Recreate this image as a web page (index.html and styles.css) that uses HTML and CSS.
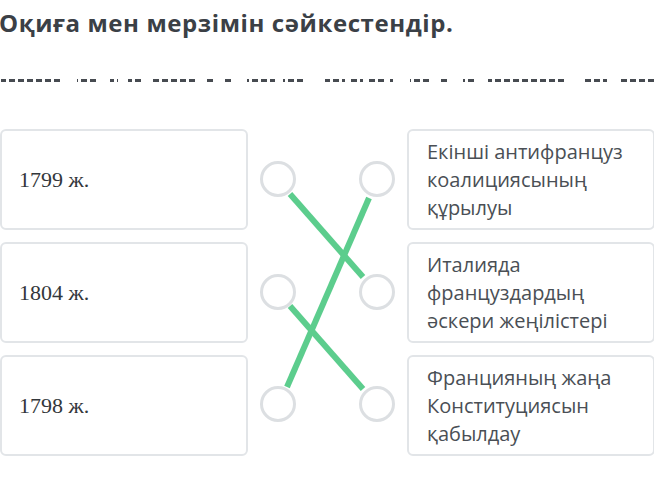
FILE: index.html
```html
<!DOCTYPE html>
<html>
<head>
    <title>Оқиға мен мерзімін сәйкестендір</title>
    <link rel="stylesheet" href="styles.css">
</head>
<body>

<div class="quiz">
    <h1 class="title">Оқиға мен мерзімін сәйкестендір.</h1>

    <!-- hidden hint line, only its bottom edge shows -->
    <svg class="scribble" width="654" height="3" viewBox="0 0 654 3">
        <defs>
            <pattern id="dash" width="9" height="3" patternUnits="userSpaceOnUse">
                <rect width="6" height="3" fill="#474b51"></rect>
            </pattern>
        </defs>
        <g fill="url(#dash)">
            <rect x="1" width="62" height="3"></rect>
            <rect x="77" width="20" height="3"></rect>
            <rect x="110" width="8" height="3"></rect>
            <rect x="128" width="14" height="3"></rect>
            <rect x="152" width="46" height="3"></rect>
            <rect x="205" width="10" height="3"></rect>
            <rect x="222" width="11" height="3"></rect>
            <rect x="247" width="28" height="3"></rect>
            <rect x="283" width="22" height="3"></rect>
            <rect x="325" width="20" height="3"></rect>
            <rect x="350" width="13" height="3"></rect>
            <rect x="368" width="17" height="3"></rect>
            <rect x="390" width="5" height="3"></rect>
            <rect x="410" width="20" height="3"></rect>
            <rect x="440" width="8" height="3"></rect>
            <rect x="463" width="14" height="3"></rect>
            <rect x="488" width="79" height="3"></rect>
            <rect x="583" width="24" height="3"></rect>
            <rect x="620" width="34" height="3"></rect>
        </g>
    </svg>

    <div class="match">
        <div class="column">
            <div class="card date">1799 ж.</div>
            <div class="card date">1804 ж.</div>
            <div class="card date">1798 ж.</div>
        </div>

        <svg class="links" width="159" height="327" viewBox="0 0 159 327">
            <g class="wire">
                <line x1="42" y1="65" x2="115" y2="148"></line>
                <line x1="121" y1="69" x2="39" y2="258"></line>
                <line x1="42" y1="177" x2="115" y2="260"></line>
            </g>
            <g class="pin">
                <circle cx="30" cy="50" r="16.5"></circle>
                <circle cx="129" cy="50" r="16.5"></circle>
                <circle cx="30" cy="163" r="16.5"></circle>
                <circle cx="129" cy="163" r="16.5"></circle>
                <circle cx="30" cy="275" r="16.5"></circle>
                <circle cx="129" cy="275" r="16.5"></circle>
            </g>
        </svg>

        <div class="column">
            <div class="card event">Екінші антифранцуз коалициясының құрылуы</div>
            <div class="card event">Италияда француздардың әскери жеңілістері</div>
            <div class="card event">Францияның жаңа Конституциясын қабылдау</div>
        </div>
    </div>
</div>

</body>
</html>
```

FILE: styles.css
```css
body {
    margin: 0;
    background: #fff;
    overflow: hidden;
}

.quiz {
    padding: 7px 0 0 0;
}

.title {
    margin: 0 0 0 -1px;
    font-family: "Open Sans", "Noto Sans", sans-serif;
    font-weight: 700;
    font-size: 24px;
    line-height: 32px;
    letter-spacing: 0.6px;
    color: #3b4046;
}

.scribble {
    display: block;
    margin: 40px 0 0 0;
}

.match {
    display: grid;
    grid-template-columns: 248px 159px 248px;
    margin: 47px 0 0 0;
}

.column {
    display: grid;
    grid-template-rows: repeat(3, 101px);
    row-gap: 12px;
}

.card {
    display: flex;
    align-items: center;
    border: 2px solid #e2e5e8;
    border-radius: 6px;
    box-sizing: border-box;
}

.date {
    padding: 0 0 0 17px;
    font-family: "Liberation Serif", serif;
    font-size: 22px;
    color: #33373b;
}

.event {
    padding: 0 10px 0 18px;
    font-family: "Open Sans", "Noto Sans", sans-serif;
    font-size: 20px;
    line-height: 28px;
    color: #4a4f55;
}

.links {
    display: block;
}

.wire line {
    stroke: #5ccd8d;
    stroke-width: 6;
}

.pin circle {
    fill: #fff;
    stroke: #dcdfe2;
    stroke-width: 3;
}
```
